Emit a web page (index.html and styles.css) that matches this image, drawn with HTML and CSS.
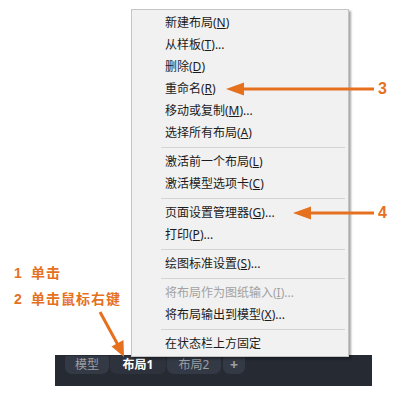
FILE: index.html
```html
<!DOCTYPE html>
<html lang="zh-CN">
<head>
    <meta charset="UTF-8">
    <meta name="viewport" content="width=device-width, initial-scale=1.0">
    <title>布局选项卡快捷菜单</title>
    <link rel="stylesheet" href="styles.css">
</head>
<body>
    <div class="scene">
        <!-- layout tabs along the bottom of the drawing area -->
        <div class="tabbar">
            <div class="tab model">模型</div>
            <div class="tab active">布局1</div>
            <div class="tab">布局2</div>
            <div class="tab plus">+</div>
        </div>

        <!-- right-click menu -->
        <ul class="menu">
            <li>新建布局(<u>N</u>)</li>
            <li>从样板(<u>T</u>)...</li>
            <li>删除(<u>D</u>)</li>
            <li>重命名(<u>R</u>)</li>
            <li>移动或复制(<u>M</u>)...</li>
            <li>选择所有布局(<u>A</u>)</li>
            <li class="sep"></li>
            <li>激活前一个布局(<u>L</u>)</li>
            <li>激活模型选项卡(<u>C</u>)</li>
            <li class="sep"></li>
            <li>页面设置管理器(<u>G</u>)...</li>
            <li>打印(<u>P</u>)...</li>
            <li class="sep"></li>
            <li>绘图标准设置(<u>S</u>)...</li>
            <li class="sep"></li>
            <li class="disabled">将布局作为图纸输入(<u>I</u>)...</li>
            <li>将布局输出到模型(<u>X</u>)...</li>
            <li class="sep"></li>
            <li>在状态栏上方固定</li>
        </ul>

        <!-- callouts -->
        <div class="steps">
            <p><b>1</b>单击</p>
            <p><b>2</b>单击鼠标右键</p>
        </div>

        <svg class="arrows" width="398" height="394" viewBox="0 0 398 394">
            <g fill="#e5711f" stroke="#e5711f">
                <line x1="240" y1="89" x2="374" y2="89" stroke-width="3"/>
                <polygon points="226,89 244,82.5 244,95.5" stroke="none"/>
                <line x1="307" y1="213" x2="374" y2="213" stroke-width="3"/>
                <polygon points="293,213 311,206.5 311,219.5" stroke="none"/>
                <line x1="100" y1="312" x2="118" y2="345" stroke-width="3"/>
                <polygon points="124,357 111.5,346.5 123.5,340" stroke="none"/>
            </g>
        </svg>
        <div class="num n3">3</div>
        <div class="num n4">4</div>
    </div>
</body>
</html>
```

FILE: styles.css
```css
body {
    margin: 0;
    background: #fff;
    font-family: "Noto Sans", "Noto Sans CJK SC", sans-serif;
}
.scene {
    position: relative;
    width: 398px;
    height: 394px;
    overflow: hidden;
}
.tabbar {
    margin: 355px 0 0 55px;
    width: 317px;
    height: 31px;
    background: #252a33;
    display: flex;
    align-items: flex-start;
    gap: 1px;
    padding: 1px 0 0 10px;
    box-sizing: border-box;
}
.tab {
    width: 54px;
    height: 18px;
    line-height: 18px;
    text-align: center;
    font-size: 12px;
    color: #9b9fa6;
    background: #343a45;
    border-radius: 2px 2px 7px 7px;
}
.tab.model {
    width: 44px;
}
.tab.active {
    width: 56px;
    color: #fff;
    font-weight: bold;
    background: #2d323c;
}
.tab.plus {
    width: 22px;
    margin-left: 1px;
    font-weight: bold;
    font-size: 14px;
}
.menu {
    position: absolute;
    left: 131px;
    top: 9px;
    width: 216px;
    margin: 0;
    padding: 2px 0 1px;
    list-style: none;
    background: #f1f1f1;
    border: 1px solid #c4c4c4;
    box-shadow: 2px 2px 2px rgba(0, 0, 0, 0.35);
}
.menu li {
    height: 22px;
    line-height: 22px;
    padding-left: 33px;
    font-size: 12px;
    color: #1b1b1b;
    white-space: nowrap;
}
.menu li.disabled {
    color: #a2a2a2;
}
.menu li.sep {
    height: 7px;
    padding: 0;
    margin: 0 3px 0 29px;
    background: linear-gradient(#f1f1f1 3px, #d4d4d4 3px, #d4d4d4 4px, #f1f1f1 4px);
}
.steps {
    position: absolute;
    left: 14px;
    top: 264px;
    color: #e5711f;
    font-size: 14px;
    font-weight: bold;
    letter-spacing: 1px;
}
.steps p {
    margin: 0 0 8px;
    line-height: 18px;
}
.steps b {
    display: inline-block;
    width: 17px;
    font-family: "Liberation Sans", sans-serif;
}
.arrows {
    position: absolute;
    left: 0;
    top: 0;
}
.num {
    position: absolute;
    left: 378px;
    color: #e5711f;
    font-family: "Liberation Sans", sans-serif;
    font-weight: bold;
    font-size: 16px;
    line-height: 18px;
}
.n3 { top: 80px; }
.n4 { top: 204px; }
```
